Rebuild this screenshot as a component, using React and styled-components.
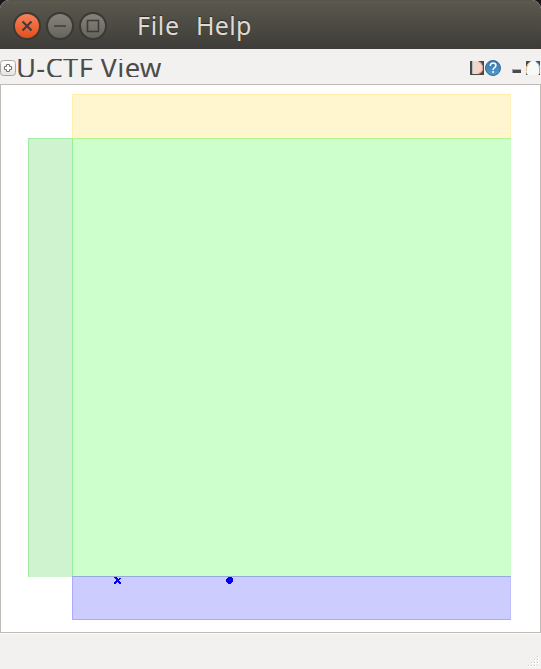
import React from "react";
import styled, { createGlobalStyle } from "styled-components";

const GlobalStyle = createGlobalStyle`
  * { box-sizing: border-box; }
  body { margin: 0; background: #19161b; font-family: "Noto Sans", "Open Sans", sans-serif; overflow: hidden; }
`;

const Window = styled.div`
  width: 541px;
  height: 669px;
  display: flex;
  flex-direction: column;
  background: #f2f1f0;
  border-radius: 9px 9px 0 0;
  overflow: hidden;
`;

const TitleBar = styled.header`
  height: 49px;
  flex: none;
  display: flex;
  align-items: center;
  padding: 2px 0 0 13px;
  background: linear-gradient(#55534a 0, #5d5b50 2px, #58564c 5px, #3d3c38 100%);
`;

const Controls = styled.div`
  display: flex;
  gap: 5px;
  margin-right: 30px;
`;

const Control = styled.button`
  width: 28px;
  height: 28px;
  padding: 0;
  border: 2px solid #3a3935;
  border-radius: 50%;
  background: ${(p) => (p.$close ? "linear-gradient(#f58159, #e2501f)" : "linear-gradient(#858379, #66645d)")};
  svg { display: block; }
`;

const Menu = styled.nav`
  display: flex;
  height: 36px;
  line-height: 34px;
  font-size: 25px;
  color: #dfdbd2;
  text-shadow: 0 -1px 1px #2b2b29;
`;

const MenuItem = styled.span`
  width: ${(p) => p.$width}px;
  letter-spacing: ${(p) => p.$spacing}px;
  white-space: nowrap;
`;

const ViewHeader = styled.div`
  height: 35px;
  flex: none;
  display: flex;
  align-items: flex-start;
  padding-top: 10px;
`;

const PlusIcon = styled.svg`
  display: block;
  flex: none;
  margin-top: 1px;
`;

const ViewTitle = styled.h1`
  margin: 0;
  width: 454px;
  height: 18px;
  overflow: hidden;
  font-size: 27.5px;
  line-height: 17px;
  font-weight: 400;
  letter-spacing: 0.25px;
  color: #4c4c4c;
  white-space: nowrap;
`;

const HeaderIcons = styled.svg`
  display: block;
  flex: none;
`;

const Canvas = styled.main`
  height: 549px;
  flex: none;
  background: #fff;
  border: 1px solid #bfbbb6;
  svg { display: block; }
`;

const StatusBar = styled.footer`
  flex: 1;
  display: flex;
  align-items: flex-end;
  justify-content: flex-end;
  border-top: 1px solid #fbfbfa;
  background: #f2f1f0;
  svg { display: block; }
`;

const glyphs = {
  close: "M7.5 7.5L16.5 16.5M16.5 7.5L7.5 16.5",
  minimize: "M6 12H18",
  maximize: "M6.5 6.5H17.5V17.5H6.5Z",
};

function WindowControl({ kind }) {
  return (
    <Control $close={kind === "close"} aria-label={kind}>
      <svg width="24" height="24" viewBox="0 0 24 24">
        <path d={glyphs[kind]} fill="none" stroke="#3c3b37" strokeWidth={kind === "close" ? 2 : 1.6} />
      </svg>
    </Control>
  );
}

function Plot() {
  return (
    <svg width="539" height="547" viewBox="1 85 539 547" shapeRendering="crispEdges">
      <rect x="72" y="94" width="439" height="44" fill="#fff6cf" />
      <path d="M72.5 138V94.5H511" fill="none" stroke="#ffefaa" />
      <path d="M510.5 95V138" stroke="#fff2bc" />
      <rect x="28" y="138" width="44" height="439" fill="#cef3ce" />
      <path d="M28.5 577V138.5H72" fill="none" stroke="#a3eba5" />
      <rect x="72" y="138" width="439" height="438" fill="#ccffcc" />
      <path d="M72.5 576V138" stroke="#96ef98" />
      <path d="M72 138.5H511" stroke="#b5f58f" />
      <rect x="72" y="576" width="439" height="44" fill="#ccccff" />
      <path d="M72.5 577V619.5H511" fill="none" stroke="#aaaaff" />
      <path d="M510.5 577V619" stroke="#c1c1ff" />
      <path d="M72 576.5H511" stroke="#98aadd" />
      <path d="M114 577h3v1h1v1h1v-1h2v1h-1v1h-1v1h1v1h1v2h-2v-1h-1v-1h-1v1h-1v1h-2v-2h1v-1h1v-2h-1v-1h-1z" fill="#0000f5" />
      <path d="M228 577h4v1h1v4h-1v1h-1v1h-3v-1h-1v-1h-1v-3h1v-1h1z" fill="#0000f5" />
    </svg>
  );
}

const gripDots = [[10, 0], [7, 3], [10, 3], [4, 6], [7, 6], [10, 6], [1, 9], [4, 9], [7, 9], [10, 9]];

export default function App() {
  return (
    <>
      <GlobalStyle />
      <Window>
        <TitleBar>
          <Controls>
            <WindowControl kind="close" />
            <WindowControl kind="minimize" />
            <WindowControl kind="maximize" />
          </Controls>
          <Menu>
            <MenuItem $width={59} $spacing={0.7}>File</MenuItem>
            <MenuItem $width={60} $spacing={0.3}>Help</MenuItem>
          </Menu>
        </TitleBar>
        <ViewHeader>
          <PlusIcon width="16" height="16" viewBox="0 0 16 16">
            <defs>
              <linearGradient id="plusFace" x2="0" y2="1">
                <stop stopColor="#fff" />
                <stop offset="1" stopColor="#e5e3e1" />
              </linearGradient>
            </defs>
            <rect x="0.5" y="0.5" width="15" height="15" rx="3" fill="url(#plusFace)" stroke="#aaa7a2" />
            <path d="M6.5 4.5h3v2h2v3h-2v2h-3v-2h-2v-3h2z" fill="#fff" stroke="#737373" />
          </PlusIcon>
          <ViewTitle>U-CTF View</ViewTitle>
          <HeaderIcons width="71" height="18" viewBox="470 59 71 18">
            <defs>
              <linearGradient id="helpFace" x2="0" y2="1">
                <stop stopColor="#3976aa" />
                <stop offset="1" stopColor="#539bcd" />
              </linearGradient>
            </defs>
            <rect x="470" y="61" width="14" height="14" fill="#4c4845" />
            <path d="M472 61h6q5 2 5 7t-5 6h-6z" fill="#f4d5c9" />
            <path d="M472.5 61v13" stroke="#a9c4c5" />
            <path d="M478 61.5q4.5 2 4.5 6.5t-4.5 5.5" fill="none" stroke="#dc9e88" />
            <circle cx="493" cy="68" r="7.5" fill="url(#helpFace)" stroke="#2f6ca1" />
            <path d="M490.3 66q0-3 2.8-3t2.8 2.5q0 1.2-1.4 2.1t-1.4 2.3M493.1 71v2" fill="none" stroke="#fff" strokeWidth="1.5" />
            <path d="M512.5 69h8.5v4h-8.5z" fill="#4a4a4c" />
            <path d="M513 69.5h8" stroke="#b8ad98" />
            <rect x="526" y="61" width="14" height="14" fill="#f8f8f7" />
            <path d="M526 61h5.5q-4.5 2-4.5 5.5h-1zM540 61h-5q5 2 5 8zM526 71q0 3 2 4h-2zM540 70q0 4-2 5h2z" fill="#4c4c4c" />
            <path d="M526.5 71v-3q.5-4 4-6" fill="none" stroke="#e8bd83" />
            <path d="M536 62q3.5 2 3.5 6v4" fill="none" stroke="#83b5e5" />
          </HeaderIcons>
        </ViewHeader>
        <Canvas>
          <Plot />
        </Canvas>
        <StatusBar>
          <svg width="14" height="13" viewBox="0 0 14 13" shapeRendering="crispEdges">
            {gripDots.map(([x, y]) => (
              <g key={`${x}-${y}`}>
                <rect x={x} y={y} width="2" height="2" fill="#fff" />
                <rect x={x} y={y} width="1" height="1" fill="#cbc8c3" />
              </g>
            ))}
          </svg>
        </StatusBar>
      </Window>
    </>
  );
}
